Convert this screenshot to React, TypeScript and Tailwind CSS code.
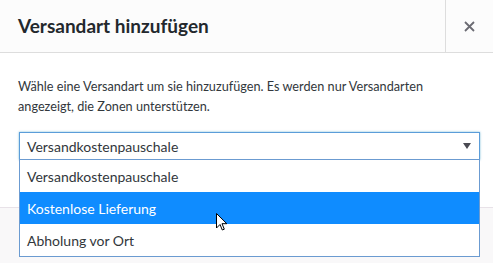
const options = ["Versandkostenpauschale", "Kostenlose Lieferung", "Abholung vor Ort"];

function Cursor() {
  return (
    <svg
      className="absolute z-20 left-[215px] top-[212px]"
      width="14"
      height="21"
      viewBox="0 0 14 21"
    >
      <path
        d="M1.5 1.5 L1.5 16 L5 12.5 L7.3 18 L9.3 17.2 L7 11.7 L11.8 11.7 Z"
        fill="#fff"
        stroke="#000"
        strokeWidth="1"
      />
    </svg>
  );
}

export default function App() {
  const selected = 1;

  return (
    <div className="relative w-[493px] h-[263px] overflow-hidden bg-white flex flex-col font-['Lato','Noto_Sans',sans-serif] text-[#32373c]">
      <div className="h-[53px] flex border-b border-[#dddddd] bg-[#fcfcfc] shrink-0">
        <h1 className="flex-1 flex items-center pl-[18px] text-[19px] font-bold text-[#23282d]">
          Versandart hinzufügen
        </h1>
        <button className="w-[48px] border-l border-[#dddddd] flex items-center justify-center">
          <svg width="11" height="11" viewBox="0 0 11 11">
            <path d="M1 1 L10 10 M10 1 L1 10" stroke="#6b6b73" strokeWidth="1.8" />
          </svg>
        </button>
      </div>

      <div className="h-[154px] shrink-0 px-[19px] pt-[23px]">
        <p className="text-[12.7px] leading-[20px] -ml-px">
          Wähle eine Versandart um sie hinzuzufügen. Es werden nur Versandarten
          angezeigt, die Zonen unterstützen.
        </p>
        <div className="relative mt-[16px] w-[461px]">
          <div className="h-[28px] border border-[#5b9dd9] flex items-center justify-between pl-[7px] pr-[8px] text-[14px] text-[#32373c] shadow-[0_0_2px_rgba(30,140,190,0.6)]">
            <span>Versandkostenpauschale</span>
            <svg width="8" height="6" viewBox="0 0 8 6">
              <path d="M0 0 L8 0 L4 6 Z" fill="#4a4a52" />
            </svg>
          </div>
          <ul className="absolute left-0 top-[27px] w-[461px] z-10 bg-white border border-[#6b9bd1] text-[14px]">
            {options.map((o, i) => (
              <li
                key={o}
                className={`h-[32px] flex items-center pl-[7px] ${
                  i === selected ? "bg-[#0f8cff] text-white" : "text-[#32373c]"
                }`}
              >
                {o}
              </li>
            ))}
          </ul>
        </div>
      </div>

      <div className="flex-1 bg-[#f9f8f9] border-t border-[#e8e2e8]"></div>
      <Cursor />
    </div>
  );
}
